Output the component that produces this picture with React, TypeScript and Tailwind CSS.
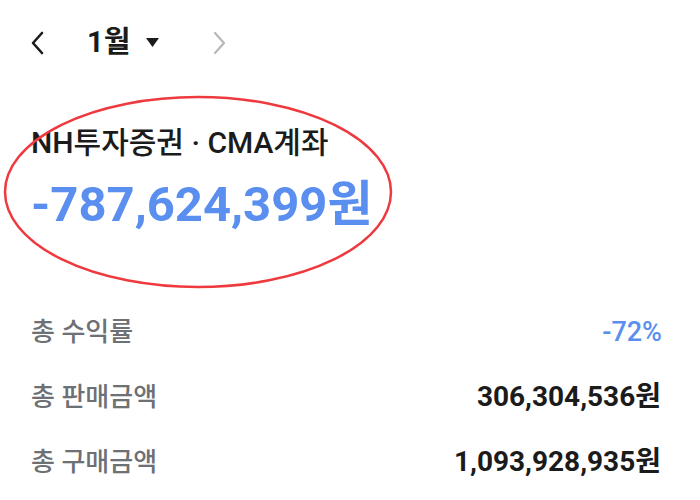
import React from "react";

export default function App() {
  const font = { fontFamily: "Roboto, 'Noto Sans CJK KR', sans-serif" };
  return (
    <div className="w-[700px] h-[500px] bg-white relative overflow-hidden text-[#1b1b1b]" style={font}>
      <div className="flex items-center h-[84px] pl-[28px]">
        <svg width="20" height="28" viewBox="0 0 20 28" className="mt-[1px]">
          <path d="M14 4 L5 14 L14 24" fill="none" stroke="#1b1b1b" strokeWidth="2.6" strokeLinecap="round" strokeLinejoin="round" />
        </svg>
        <span className="ml-[39px] text-[29px] font-bold leading-none">1월</span>
        <svg width="15" height="11" viewBox="0 0 15 11" className="ml-[15px]">
          <path d="M1 1 L14 1 L7.5 10 Z" fill="#1b1b1b" />
        </svg>
        <svg width="20" height="28" viewBox="0 0 20 28" className="ml-[49px] mt-[1px]">
          <path d="M6 4 L15 14 L6 24" fill="none" stroke="#b8b8b8" strokeWidth="2.2" strokeLinecap="round" strokeLinejoin="round" />
        </svg>
      </div>
      <div className="relative pl-[31px] pt-[44px]">
        <div className="text-[30px] font-medium leading-none">NH투자증권 · CMA계좌</div>
        <div className="mt-[22px] text-[49px] font-bold leading-none text-[#5a8eef]">-787,624,399원</div>
      </div>
      <svg className="absolute left-0 top-0" width="700" height="500" viewBox="0 0 700 500">
        <ellipse cx="198" cy="192" rx="193" ry="95" fill="none" stroke="#ee3a3f" strokeWidth="2.5" />
      </svg>
      <div className="absolute left-0 right-0 top-[316px] px-[31px] flex flex-col gap-[33px]">
        <div className="flex justify-between items-center h-[32px]">
          <span className="text-[26px] font-medium text-[#6d7075]">총 수익률</span>
          <span className="text-[27px] font-medium text-[#5a8eef] pr-[7px]">-72%</span>
        </div>
        <div className="flex justify-between items-center h-[32px]">
          <span className="text-[26px] font-medium text-[#6d7075]">총 판매금액</span>
          <span className="text-[28px] font-bold pr-[8px]">306,304,536원</span>
        </div>
        <div className="flex justify-between items-center h-[32px]">
          <span className="text-[26px] font-medium text-[#6d7075]">총 구매금액</span>
          <span className="text-[28px] font-bold pr-[8px]">1,093,928,935원</span>
        </div>
      </div>
    </div>
  );
}
